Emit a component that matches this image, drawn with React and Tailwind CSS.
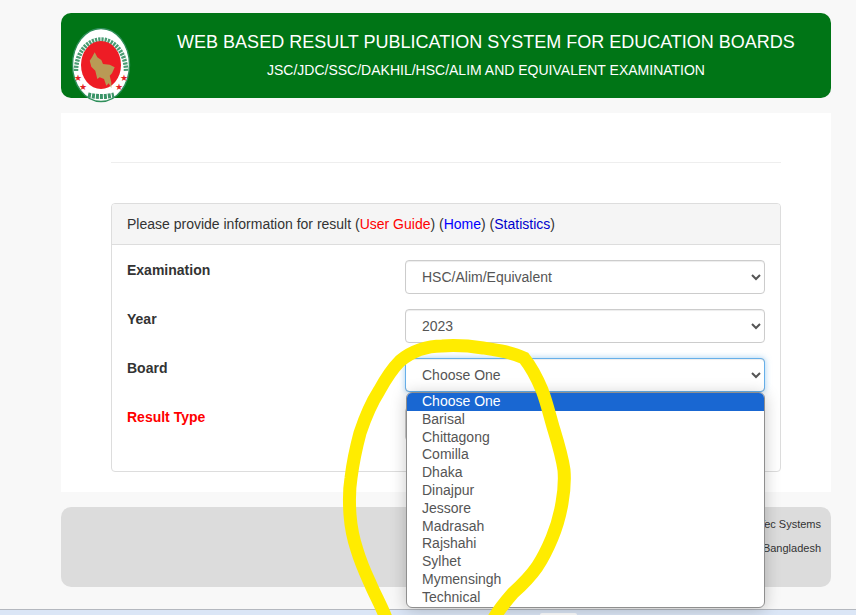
import React from "react";

const BOARDS = [
  "Choose One",
  "Barisal",
  "Chittagong",
  "Comilla",
  "Dhaka",
  "Dinajpur",
  "Jessore",
  "Madrasah",
  "Rajshahi",
  "Sylhet",
  "Mymensingh",
  "Technical",
];

// Government seal, drawn by hand
function Seal() {
  return (
    <svg width="60" height="76" viewBox="0 0 60 76" className="block">
      <ellipse cx="30" cy="37" rx="28.5" ry="36.5" fill="#ffffff" stroke="#2f8f5b" strokeWidth="1.4" />
      <path d="M5 43 A25 31.5 0 1 1 55 43" fill="none" stroke="#4a9c74" strokeWidth="4.5" strokeDasharray="2.2 1" />
      <path d="M17 67 Q30 70 43 67" fill="none" stroke="#3b9468" strokeWidth="5" strokeDasharray="3 1" />
      <ellipse cx="30" cy="37" rx="20" ry="24" fill="#ee1c25" />
      <path
        d="M23.7 24.3 L26.3 29.3 L30.3 32 L32 36 L38.7 36.7 L43.7 39.3 L41 45.3 L38.7 47.7 L40.3 54.3 L40.3 60 L37.7 55.3 L35.3 57.7 L33 51 L28.7 49.3 L26.3 51 L24.3 42.7 L20.3 38.7 L18.7 32.7 L21 29.3 Z"
        fill="#b99a55"
      />
      <g fill="#e21f26" fontSize="9" fontFamily="'DejaVu Sans', sans-serif" textAnchor="middle">
        <text x="7" y="53">★</text>
        <text x="12" y="62">★</text>
        <text x="48" y="62">★</text>
        <text x="53" y="53">★</text>
      </g>
    </svg>
  );
}

// Yellow marker scribble over the board list
function Scribble() {
  return (
    <svg width="856" height="615" viewBox="0 0 856 615" className="absolute left-0 top-0 z-20 pointer-events-none">
      <path
        d="M386 618 C380 603 375 595 370 583 C364 570 360 560 357 550 C353 538 351 528 350 515 C349 500 349 490 351 478 C353 462 356 448 360 433 C365 418 370 405 379 391 C385 380 391 370 400 361 C412 351 428 346 442 346 C456 345 470 346 483 348 C497 350 512 352 524 358 C532 368 537 378 542 390 C547 403 550 417 554 430 C558 443 562 456 564 470 C565 482 564 492 562 503 C560 515 557 526 552 538 C547 550 543 558 537 567 C530 577 522 585 513 593 C506 601 500 608 494 618"
        fill="none"
        stroke="#ffec00"
        strokeWidth="13"
        strokeLinecap="round"
      />
    </svg>
  );
}

function Row({ label, labelClass, value, children }) {
  return (
    <div className="flex mb-[15px] relative">
      <label className={`w-[278px] font-bold leading-[20px] ${labelClass}`}>{label}</label>
      <div className="w-[360px] relative">
        <select
          defaultValue={value}
          className="block w-full h-[34px] px-[12px] bg-white border border-[#cccccc] rounded-[4px] text-[14px] text-[#555555] shadow-[inset_0_1px_1px_rgba(0,0,0,0.075)]"
        >
          <option>{value}</option>
        </select>
        {children}
      </div>
    </div>
  );
}

export default function App() {
  return (
    <div className="relative h-[615px] w-[856px] overflow-hidden bg-[#f8f8f8] font-['Liberation_Sans',Arial,sans-serif] text-[14px] text-[#333333]">
      <div className="mx-[61px] w-[770px] pt-[13px]">
        <div className="flex h-[85px] rounded-[10px] bg-[#007516] text-white">
          <div className="w-[80px] shrink-0 pl-[10px] pt-[15px]">
            <Seal />
          </div>
          <div className="flex-1 text-center">
            <h1 className="mt-[18px] text-[18px] leading-[22px] font-normal">
              WEB BASED RESULT PUBLICATION SYSTEM FOR EDUCATION BOARDS
            </h1>
            <p className="mt-[9px] text-[14px] leading-[16px]">
              JSC/JDC/SSC/DAKHIL/HSC/ALIM AND EQUIVALENT EXAMINATION
            </p>
          </div>
        </div>

        <div className="mt-[15px] h-[379px] bg-white px-[50px] pt-[49px]">
          <hr className="border-0 border-t border-[#eeeeee]" />
          <div className="mt-[40px] h-[269px] rounded-[4px] border border-[#dddddd] bg-white">
            <div className="flex h-[41px] items-center rounded-t-[3px] border-b border-[#dddddd] bg-[#f5f5f5] px-[15px]">
              <span>
                Please provide information for result (<a className="text-[#ff0000]">User Guide</a>) (
                <a className="text-[#0000ff]">Home</a>) (<a className="text-[#0000cc]">Statistics</a>)
              </span>
            </div>
            <div className="px-[15px] pt-[15px]">
              <Row label="Examination" value="HSC/Alim/Equivalent" />
              <Row label="Year" value="2023" />
              <Row label="Board" value="Choose One">
                <div className="absolute left-0 top-0 h-[34px] w-full rounded-[4px] border border-[#66afe9] shadow-[0_0_6px_rgba(102,175,233,0.6)] pointer-events-none" />
                <ul className="absolute left-[1px] right-0 top-[34px] z-10 overflow-hidden rounded-[6px] border border-[#8f8f8f] bg-white text-[14px] leading-[17.8px] text-[#555555] shadow-[0_2px_16px_rgba(0,0,0,0.22)]">
                  {BOARDS.map((b, i) => (
                    <li key={b} className={i === 0 ? "bg-[#1967d2] pl-[15px] text-white" : "pl-[15px]"}>
                      {b}
                    </li>
                  ))}
                </ul>
              </Row>
              <Row label="Result Type" labelClass="text-[#ff0000]" value="Choose One" />
            </div>
          </div>
        </div>

        <div className="mt-[15px] h-[80px] rounded-[10px] bg-[#dcdcdc] pr-[10px] pt-[9px] text-right text-[11px] leading-[16px]">
          <p>Tec Systems</p>
          <p className="mt-[8px]">Bangladesh</p>
        </div>
      </div>

      <div className="absolute bottom-0 left-0 h-[6px] w-full border-t border-[#b4b8bf] bg-[#dbe6f6]">
        <div className="absolute left-[540px] top-[3px] h-[3px] w-[37px] rounded-t-[2px] bg-white" />
      </div>
      <Scribble />
    </div>
  );
}
